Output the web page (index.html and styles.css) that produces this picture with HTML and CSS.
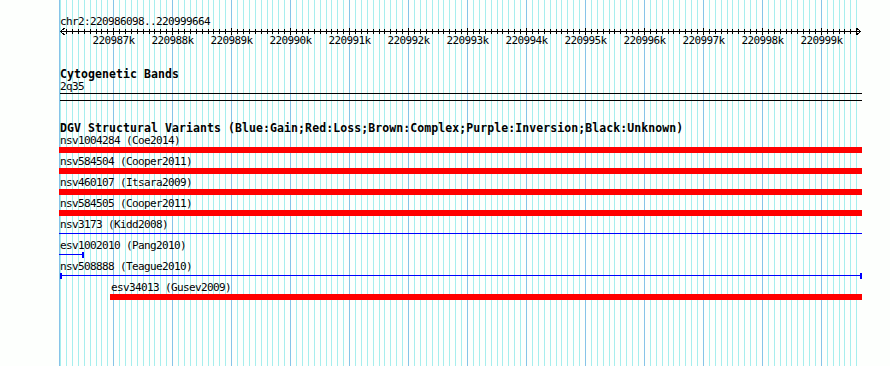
FILE: index.html
```html
<!DOCTYPE html>
<html>
<head>
<meta charset="utf-8">
<title>chr2:220986098..220999664</title>
<link rel="stylesheet" href="styles.css">
</head>
<body>
<div class="panel">
  <svg class="grid" id="grid" width="890" height="366" aria-hidden="true"></svg>
  <div class="content">
    <div class="label seg">chr2:220986098..220999664</div>
    <svg class="axis" id="axis" width="890" height="19"></svg>

    <div class="track cyto">
      <div class="title">Cytogenetic Bands</div>
      <div class="label band-name">2q35</div>
      <div class="band"></div>
    </div>

    <div class="track dgv">
      <div class="title">DGV Structural Variants (Blue:Gain;Red:Loss;Brown:Complex;Purple:Inversion;Black:Unknown)</div>
      <div class="lanes">
        <div class="feat" style="margin-left:0px;width:803px"><div class="flabel">nsv1004284 (Coe2014)</div><div class="glyph bar"></div></div>
        <div class="feat" style="margin-left:0px;width:803px"><div class="flabel">nsv584504 (Cooper2011)</div><div class="glyph bar"></div></div>
        <div class="feat" style="margin-left:0px;width:803px"><div class="flabel">nsv460107 (Itsara2009)</div><div class="glyph bar"></div></div>
        <div class="feat" style="margin-left:0px;width:803px"><div class="flabel">nsv584505 (Cooper2011)</div><div class="glyph bar"></div></div>
        <div class="feat" style="margin-left:0px;width:803px"><div class="flabel">nsv3173 (Kidd2008)</div><div class="glyph line"></div></div>
        <div class="feat" style="margin-left:0px;width:25px"><div class="flabel">esv1002010 (Pang2010)</div><div class="glyph line end-r"></div></div>
        <div class="feat" style="margin-left:1px;width:802px"><div class="flabel nopad">nsv508888 (Teague2010)</div><div class="glyph line end-l end-r"></div></div>
        <div class="feat" style="margin-left:51px;width:752px"><div class="flabel">esv34013 (Gusev2009)</div><div class="glyph bar"></div></div>
      </div>
    </div>
  </div>
</div>
<script src="script.js"></script>
</body>
</html>
```

FILE: styles.css
```css
* {
  box-sizing: border-box;
  margin: 0;
  padding: 0;
}

html,
body {
  background: #fdfffd;
}

body {
  width: 890px;
  height: 366px;
  overflow: hidden;
  font-family: "DejaVu Sans Mono", "Liberation Mono", monospace;
  color: #000;
}

.panel {
  position: relative;
  width: 890px;
  height: 366px;
}

.grid {
  position: absolute;
  left: 0;
  top: 0;
  display: block;
}

.grid .minor {
  fill: #a6eeee;
}

.grid .major {
  fill: #86c4e8;
}

.content {
  position: relative;
  padding-top: 16px;
}

.label {
  font-size: 11px;
  letter-spacing: -0.62px;
  line-height: 12px;
  height: 12px;
  white-space: nowrap;
  padding-left: 60px;
}

.axis {
  display: block;
}

.axis .ink {
  fill: #000;
}

.axis .arrow {
  fill: none;
  stroke: #000;
  stroke-width: 1;
  shape-rendering: crispEdges;
}

.axis text {
  font-family: "DejaVu Sans Mono", "Liberation Mono", monospace;
  font-size: 11px;
  letter-spacing: -0.62px;
  fill: #000;
}

.title {
  font-weight: bold;
  font-size: 11.5px;
  letter-spacing: 0.08px;
  line-height: 12px;
  height: 12px;
  white-space: nowrap;
  padding-left: 60px;
}

.cyto {
  margin-top: 21px;
}

.band-name {
  margin-top: 1px;
}

.band {
  margin-left: 60px;
  width: 802px;
  height: 8px;
  border-top: 1px solid #000;
  border-bottom: 1px solid #000;
}

.dgv {
  margin-top: 21px;
}

.lanes {
  margin-top: 1px;
  margin-left: 59px;
  width: 803px;
}

.feat {
  margin-bottom: 3px;
}

.flabel {
  font-size: 11px;
  letter-spacing: -0.62px;
  line-height: 12px;
  height: 12px;
  white-space: nowrap;
  padding-left: 1px;
}

.flabel.nopad {
  padding-left: 0;
}

.glyph {
  height: 6px;
}

.glyph.bar {
  background: #ff0000;
}

.glyph.line {
  background: linear-gradient(#0000ff, #0000ff) 0 2px / 100% 1px no-repeat;
}

.glyph.end-l {
  border-left: 2px solid #0000ff;
}

.glyph.end-r {
  border-right: 2px solid #0000ff;
}
```

FILE: script.js
```js
(function () {
  var START = 220986098, END = 220999664;
  var X0 = 60, PXBP = 0.058975;
  var NS = 'http://www.w3.org/2000/svg';

  function xAt(bp) {
    return Math.round(X0 + (bp - START) * PXBP);
  }

  function el(parent, name, attrs) {
    var e = document.createElementNS(NS, name);
    for (var k in attrs) e.setAttribute(k, attrs[k]);
    parent.appendChild(e);
    return e;
  }

  // grid
  var grid = document.getElementById('grid');
  el(grid, 'rect', { x: 59, y: 0, width: 1, height: 366, 'class': 'major' });
  for (var bp = Math.ceil(START / 100) * 100; bp <= END; bp += 100) {
    el(grid, 'rect', {
      x: xAt(bp), y: 0, width: 1, height: 366,
      'class': bp % 1000 === 0 ? 'major' : 'minor'
    });
  }

  // ruler
  var axis = document.getElementById('axis');
  var left = 60, right = 860;
  el(axis, 'rect', { x: left, y: 3, width: right - left + 1, height: 1, 'class': 'ink' });
  el(axis, 'polyline', { points: '64.5,0 60.5,3.5 64.5,7', 'class': 'arrow' });
  el(axis, 'polyline', { points: '856.5,0 860.5,3.5 856.5,7', 'class': 'arrow' });
  for (var b = Math.ceil(START / 100) * 100; b <= END; b += 100) {
    var x = xAt(b);
    if (x < left + 4 || x > right - 4) continue;
    if (b % 1000 === 0) {
      el(axis, 'rect', { x: x, y: 0, width: 1, height: 7, 'class': 'ink' });
      var t = el(axis, 'text', { x: x + 0.5, y: 16, 'text-anchor': 'middle' });
      t.textContent = (b / 1000) + 'k';
    } else {
      el(axis, 'rect', { x: x, y: 1, width: 1, height: 5, 'class': 'ink' });
    }
  }
})();
```
